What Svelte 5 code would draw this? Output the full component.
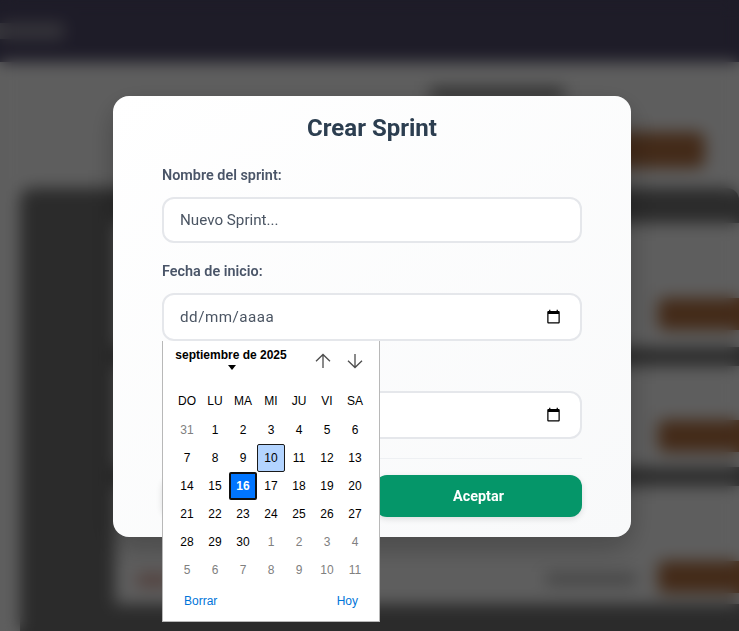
<script lang="ts">
	const weekdays = ['DO', 'LU', 'MA', 'MI', 'JU', 'VI', 'SA'];

	// Sept 2025 grid, with the spill-over days from the months around it.
	const days = [
		...[31].map((n) => ({ n, muted: true })),
		...Array.from({ length: 30 }, (_, i) => ({ n: i + 1, muted: false })),
		...Array.from({ length: 11 }, (_, i) => ({ n: i + 1, muted: true }))
	];

	const rows = [
		{ height: 124, top: 75, button: true },
		{ height: 101, top: 54, button: true },
		{ height: 118, top: 75, button: true, meta: true }
	];
</script>

<div class="page">
	<header class="topbar"><span class="brand"></span></header>
	<div class="page-head">
		<span class="page-title"></span>
		<span class="page-action"></span>
	</div>
	<section class="board">
		{#each rows as row}
			<div class="row" style="height: {row.height}px; padding-top: {row.top}px">
				{#if row.meta}
					<span class="row-tag"></span>
					<span class="row-meta"></span>
				{/if}
				<span class="row-button"></span>
			</div>
		{/each}
	</section>
</div>

<div class="overlay">
	<form class="modal">
		<h2>Crear Sprint</h2>

		<div class="field">
			<label for="name">Nombre del sprint:</label>
			<input id="name" type="text" placeholder="Nuevo Sprint..." />
		</div>

		<div class="field">
			<span class="label">Fecha de inicio:</span>
			<div class="date-input">
				<span class="date-mask">dd/mm/aaaa</span>
				<svg class="date-icon" viewBox="0 0 24 24" aria-hidden="true">
					<path d="M20 3h-1V1h-2v2H7V1H5v2H4c-1.1 0-2 .9-2 2v16c0 1.1.9 2 2 2h16c1.1 0 2-.9 2-2V5c0-1.1-.9-2-2-2zm0 18H4V8h16v13z" />
				</svg>
			</div>

			<div class="calendar">
				<div class="cal-head">
					<div class="cal-month">
						<span>septiembre de 2025</span>
						<i class="caret"></i>
					</div>
					<div class="cal-nav">
						<svg viewBox="0 0 16 16" aria-hidden="true"><path d="M8 15V1.500M1 8.200 8 1.500l7 6.700" /></svg>
						<svg viewBox="0 0 16 16" aria-hidden="true"><path d="M8 1v13.500M1 7.800l7 6.700 7-6.700" /></svg>
					</div>
				</div>
				<div class="cal-grid">
					{#each weekdays as day}
						<span class="weekday">{day}</span>
					{/each}
					{#each days as day}
						<span
							class="day"
							class:muted={day.muted}
							class:today={!day.muted && day.n === 10}
							class:selected={!day.muted && day.n === 16}
						>
							{day.n}
						</span>
					{/each}
				</div>
				<div class="cal-foot">
					<span>Borrar</span>
					<span>Hoy</span>
				</div>
			</div>
		</div>

		<div class="field">
			<span class="label">Fecha de fin:</span>
			<div class="date-input">
				<span class="date-mask">dd/mm/aaaa</span>
				<svg class="date-icon" viewBox="0 0 24 24" aria-hidden="true">
					<path d="M20 3h-1V1h-2v2H7V1H5v2H4c-1.1 0-2 .9-2 2v16c0 1.1.9 2 2 2h16c1.1 0 2-.9 2-2V5c0-1.1-.9-2-2-2zm0 18H4V8h16v13z" />
				</svg>
			</div>
		</div>

		<div class="actions">
			<button type="button" class="btn cancel">Cancelar</button>
			<button type="button" class="btn accept">Aceptar</button>
		</div>
	</form>
</div>

<style>
	:global(body) {
		background: #ececec;
		font-family: Roboto, 'Liberation Sans', sans-serif;
		overflow: hidden;
	}

	.page {
		height: 631px;
		overflow: hidden;
		width: 739px;
	}

	.topbar {
		align-items: center;
		background: #4b4664;
		display: flex;
		height: 62px;
	}

	.brand {
		background: #8a8795;
		height: 16px;
		width: 64px;
	}

	.page-head {
		align-items: flex-start;
		box-sizing: border-box;
		display: flex;
		height: 126px;
		padding: 26px 34px 0 430px;
	}

	.page-title {
		background: #707070;
		height: 12px;
		width: 135px;
	}

	.page-action {
		background: #a86a3e;
		border-radius: 8px;
		height: 36px;
		margin: 44px 0 0 52px;
		width: 90px;
	}

	.board {
		background: #6c6c6c;
		border-radius: 12px;
		display: flex;
		flex-direction: column;
		gap: 19px;
		margin-left: 20px;
		padding: 35px 0 40px 95px;
	}

	.row {
		align-items: flex-start;
		background: #ececec;
		box-sizing: border-box;
		display: flex;
		justify-content: flex-end;
	}

	.row-tag {
		background: #c9988e;
		height: 12px;
		margin-left: 22px;
		margin-right: auto;
		margin-top: 13px;
		width: 34px;
	}

	.row-meta {
		background: #a0a0a0;
		height: 10px;
		margin-right: 22px;
		margin-top: 13px;
		width: 90px;
	}

	.row-button {
		background: #a86a3e;
		border-radius: 6px;
		height: 32px;
		margin-right: -10px;
		width: 91px;
	}

	.overlay {
		backdrop-filter: blur(8px);
		background: rgb(0 0 0 / 60%);
		box-sizing: border-box;
		inset: 0;
		padding: 96px 0 0 113px;
		position: fixed;
	}

	.modal {
		background: linear-gradient(145deg, #fff, #f8f9fa);
		border-radius: 16px;
		box-shadow: 0 10px 30px rgb(0 0 0 / 25%);
		box-sizing: border-box;
		height: 441px;
		padding: 20px 49px 0;
		width: 518px;
	}

	h2 {
		color: #2c3e50;
		font-size: 24px;
		font-weight: 700;
		line-height: 24px;
		margin: 0 0 27px;
		text-align: center;
	}

	.field {
		margin-bottom: 20px;
		position: relative;
	}

	label,
	.label {
		color: #4a5568;
		display: block;
		font-size: 14.4px;
		font-weight: 600;
		line-height: 16px;
		margin-bottom: 13px;
		padding-top: 1px;
	}

	input,
	.date-input {
		background: #fff;
		border: 2px solid #e5e7eb;
		border-radius: 12px;
		box-sizing: border-box;
		color: #4b5563;
		display: block;
		font-family: inherit;
		font-size: 15.2px;
		height: 46px;
		outline: none;
		padding: 0 16px;
		width: 420px;
	}

	input::placeholder {
		color: #4b5563;
		opacity: 1;
	}

	.date-input {
		align-items: center;
		display: flex;
		height: 48px;
		justify-content: space-between;
		padding-bottom: 1px;
	}

	.date-mask {
		letter-spacing: 0.5px;
	}

	.date-icon {
		display: block;
		fill: #000;
		height: 15px;
		margin-right: 3px;
		width: 15px;
	}

	.calendar {
		background: #fff;
		border: 1px solid #b8b8b8;
		border-top: none;
		box-sizing: border-box;
		font-family: 'Liberation Sans', Arial, sans-serif;
		font-size: 12px;
		height: 281px;
		left: 0;
		padding: 0 10px;
		position: absolute;
		top: 78px;
		width: 218px;
		z-index: 2;
	}

	.cal-head {
		display: flex;
		height: 39px;
		justify-content: space-between;
		padding: 7px 0 0 2px;
	}

	.cal-month {
		color: #000;
		font-weight: 700;
		text-align: center;
		width: 112px;
	}

	.caret {
		border-left: 4px solid transparent;
		border-right: 4px solid transparent;
		border-top: 5px solid #000;
		display: block;
		height: 0;
		margin: 3px 0 0 53px;
		width: 0;
	}

	.cal-nav {
		display: flex;
		gap: 16px;
		margin-right: 6px;
		padding-top: 5px;
	}

	.cal-nav svg {
		fill: none;
		height: 16px;
		stroke: #4d4d4d;
		stroke-width: 1.3;
		width: 16px;
	}

	.cal-grid {
		display: grid;
		grid-auto-rows: 28px;
		grid-template-columns: repeat(7, 28px);
		grid-template-rows: 29px;
	}

	.weekday,
	.day {
		align-items: center;
		box-sizing: border-box;
		color: #000;
		display: flex;
		justify-content: center;
	}

	.weekday {
		padding-bottom: 1px;
	}

	.muted {
		color: #808080;
	}

	.today {
		background: #b3d4ff;
		border: 1px solid #1a1a1a;
		border-radius: 2px;
	}

	.selected {
		background: #0075ff;
		border: 2px solid #101010;
		border-radius: 2px;
		color: #fff;
		font-weight: 700;
	}

	.cal-foot {
		color: #0075d9;
		display: flex;
		justify-content: space-between;
		padding: 10px 11px 0;
	}

	.actions {
		border-top: 1px solid #eef0f3;
		display: flex;
		gap: 6px;
		margin-top: -1px;
		padding-top: 16px;
	}

	.btn {
		border: none;
		border-radius: 12px;
		box-shadow: 0 2px 6px rgb(0 0 0 / 12%);
		color: #fff;
		flex: 1;
		font-family: inherit;
		font-size: 14.4px;
		font-weight: 700;
		height: 42px;
	}

	.cancel {
		background: #6b7280;
	}

	.accept {
		background: #059669;
	}
</style>
